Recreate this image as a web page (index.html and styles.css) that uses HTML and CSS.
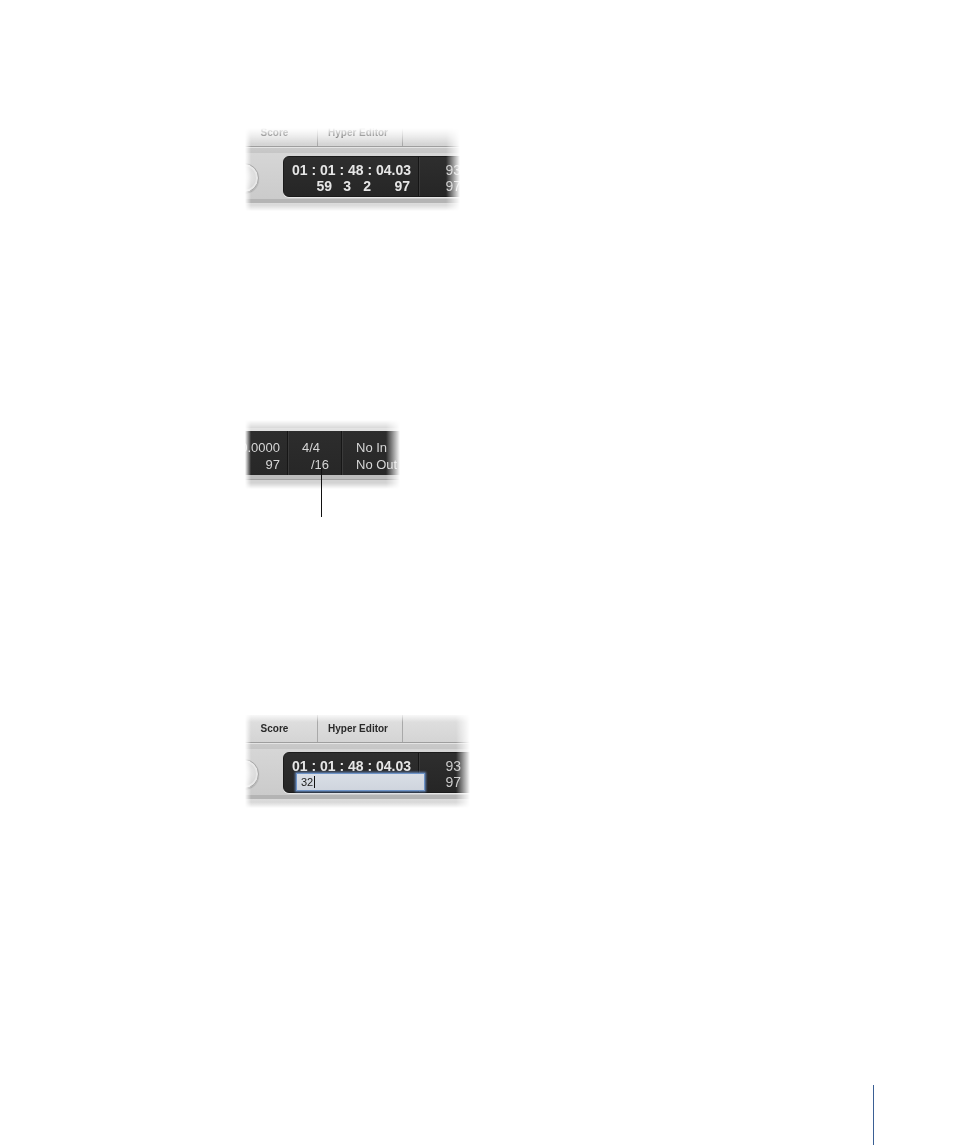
FILE: index.html
```html
<!DOCTYPE html>
<html>
<head>
<meta charset="utf-8">
<link rel="stylesheet" href="styles.css">
</head>
<body>
<div class="page">
  <div class="fig fig1 fade fade-top-soft">
    <div class="shot">
      <div class="tabs"><div class="tab tab-score">Score</div><div class="tab tab-hyper">Hyper Editor</div></div>
      <div class="rule-top"></div>
      <div class="band-top"></div>
      <div class="toolbar">
        <div class="knob"></div>
        <div class="lcd">
          <div class="cell-time">
            <div class="row">01 : 01 : 48 : 04.03</div>
            <div class="row row-pos"><span class="c1">59</span><span class="c2">3</span><span class="c3">2</span><span class="c4">97</span></div>
          </div>
          <div class="cell-tempo">
            <div class="row">93</div>
            <div class="row">97</div>
          </div>
        </div>
      </div>
      <div class="band-bot"></div>
      <div class="band-bot2"></div>
    </div>
  </div>

  <div class="fig2wrap">
    <div class="shot2 fade">
      <div class="s2-band-top"></div>
      <div class="s2-hl"></div>
      <div class="s2-lcd">
        <div class="s2-tempo">
          <div class="row2">120.0000</div>
          <div class="row2">97</div>
        </div>
        <div class="s2-sig">
          <div class="row2 sig-top">4/4</div>
          <div class="row2 sig-bot">/16</div>
        </div>
        <div class="s2-io">
          <div class="row2">No In</div>
          <div class="row2">No Out</div>
        </div>
      </div>
      <div class="s2-band"></div>
      <div class="s2-rule"></div>
      <div class="s2-band2"></div>
    </div>
    <div class="callout"></div>
  </div>

  <div class="fig fig3 fade">
    <div class="shot">
      <div class="tabs"><div class="tab tab-score">Score</div><div class="tab tab-hyper">Hyper Editor</div></div>
      <div class="rule-top"></div>
      <div class="band-top"></div>
      <div class="toolbar">
        <div class="knob"></div>
        <div class="lcd">
          <div class="cell-time">
            <div class="row">01 : 01 : 48 : 04.03</div>
            <div class="entry"><span class="entry-text">32</span><span class="caret"></span></div>
          </div>
          <div class="cell-tempo">
            <div class="row">93</div>
            <div class="row">97</div>
          </div>
        </div>
      </div>
      <div class="band-bot"></div>
      <div class="band-bot2"></div>
    </div>
  </div>

  <div class="folio"></div>
</div>
</body>
</html>
```

FILE: styles.css
```css
* { box-sizing: border-box; }
html, body { margin: 0; padding: 0; background: #fff; }
body {
  width: 954px;
  height: 1145px;
  overflow: hidden;
  font-family: "Liberation Sans", Arial, sans-serif;
}
.page {
  padding-left: 245px;
  display: flex;
  flex-direction: column;
  align-items: flex-start;
}

/* fading edges of the cropped screenshots */
.fade {
  -webkit-mask-image:
    linear-gradient(to right, transparent 0, #000 6px, #000 calc(100% - 14px), transparent 100%),
    linear-gradient(to bottom, transparent 0, #000 9px, #000 calc(100% - 6px), transparent 100%);
  -webkit-mask-composite: source-in;
  mask-composite: intersect;
}
.fade-top-soft {
  -webkit-mask-image:
    linear-gradient(to right, transparent 0, #000 6px, #000 calc(100% - 14px), transparent 100%),
    linear-gradient(to bottom, transparent 0, rgba(0,0,0,.35) 6px, #000 16px, #000 calc(100% - 6px), transparent 100%);
}

.fig { overflow: hidden; position: relative; }
.fig1 { margin-top: 128px; width: 215px; height: 83px; }
.fig1 .shot { margin-top: -9px; }
.fig3 { margin-top: 224px; width: 225px; height: 95px; }
.fig3 .shot { margin-top: 2px; }

.shot { width: 260px; }

.tabs {
  height: 27px;
  display: flex;
  background: linear-gradient(#e1e1e1, #d4d4d4);
}
.tab {
  height: 27px;
  line-height: 28px;
  font-size: 10px;
  font-weight: bold;
  color: #2a2a2a;
  text-align: center;
  border-right: 1px solid #a9a9a9;
  white-space: nowrap;
}
.tab-score { width: 73px; padding-right: 13px; }
.tab-hyper { width: 85px; padding-right: 4px; }

.rule-top { height: 1px; background: #9e9e9e; }
.band-top { height: 6px; background: linear-gradient(#e4e4e4 0, #e4e4e4 1px, #c9c9c9 1px, #c6c6c6); }

.toolbar {
  height: 46px;
  display: flex;
  align-items: flex-start;
  padding-top: 3px;
  background: linear-gradient(#d6d6d6, #cbcbcb);
}
.knob {
  width: 30px;
  height: 30px;
  margin-left: -16px;
  margin-top: 7px;
  border-radius: 50%;
  border: 1px solid #a7a7a7;
  background: radial-gradient(circle at 50% 45%, #f2f2f2 0, #dcdcdc 55%, #c2c2c2 100%);
  box-shadow: 0 1px 1px rgba(0,0,0,.18), inset 0 0 0 2px #e8e8e8;
  flex: none;
}
.lcd {
  margin-left: 24px;
  height: 41px;
  width: 210px;
  flex: none;
  display: flex;
  background: linear-gradient(#2e2e2e, #262626);
  border: 1px solid #1b1b1b;
  border-radius: 6px;
  box-shadow: 0 1px 0 rgba(255,255,255,.55);
}
.cell-time {
  width: 135px;
  flex: none;
  padding: 5px 0 0 8px;
  border-right: 1px solid #151515;
  box-shadow: 1px 0 0 #3a3a3a;
  color: #e6e6e6;
  font-weight: bold;
  font-size: 14px;
}
.row { height: 16px; line-height: 16px; white-space: nowrap; }
.row-pos { display: flex; }
.row-pos span { display: block; text-align: right; }
.c1 { width: 40px; }
.c2 { width: 19px; }
.c3 { width: 20px; }
.c4 { width: 39px; }

.cell-tempo {
  width: 50px;
  flex: none;
  padding: 5px 8px 0 0;
  text-align: right;
  color: #cacaca;
  font-size: 14px;
}

.entry {
  margin-top: -1px;
  margin-left: 4px;
  width: 129px;
  height: 18px;
  display: flex;
  align-items: center;
  padding-left: 4px;
  background: linear-gradient(#d9dee6, #cfd5de);
  border: 1px solid #6d93c8;
  box-shadow: 0 0 2px 1px rgba(110,150,210,.8);
  font-weight: normal;
  font-size: 11px;
  color: #222;
}
.caret { width: 1px; height: 12px; background: #111; margin-left: 1px; }

.band-bot { height: 4px; background: #b4b4b4; }
.band-bot2 { height: 10px; background: linear-gradient(#dcdcdc, #d0d0d0); }

/* second figure */
.fig2wrap { margin-top: 209px; width: 155px; height: 69px; position: relative; }
.shot2 { width: 155px; height: 69px; overflow: hidden; }
.s2-band-top { height: 8px; background: #d4d4d4; }
.s2-hl { height: 3px; background: #e2e2e2; }
.s2-lcd {
  height: 44px;
  display: flex;
  background: linear-gradient(#2d2d2d, #272727);
  color: #d6d6d6;
  font-size: 13px;
}
.row2 { height: 17px; line-height: 17px; white-space: nowrap; }
.s2-tempo {
  margin-left: -38px;
  width: 81px;
  flex: none;
  padding: 8px 7px 0 0;
  text-align: right;
  border-right: 1px solid #161616;
  box-shadow: 1px 0 0 #3a3a3a;
}
.s2-sig {
  width: 54px;
  flex: none;
  padding-top: 8px;
  border-right: 1px solid #161616;
  box-shadow: 1px 0 0 #3a3a3a;
}
.sig-top { padding-left: 14px; }
.sig-bot { text-align: right; padding-right: 12px; }
.s2-io { flex: none; padding: 8px 0 0 14px; }
.s2-band { height: 4px; background: #bcbcbc; }
.s2-rule { height: 1px; background: #a3a3a3; }
.s2-band2 { height: 9px; background: #d3d3d3; }

.callout {
  position: absolute;
  left: 76px;
  top: 48px;
  width: 1px;
  height: 49px;
  background: #111;
}

.folio {
  margin-left: 628px;
  margin-top: 277px;
  width: 1px;
  height: 60px;
  background: #3a5f94;
}
```
